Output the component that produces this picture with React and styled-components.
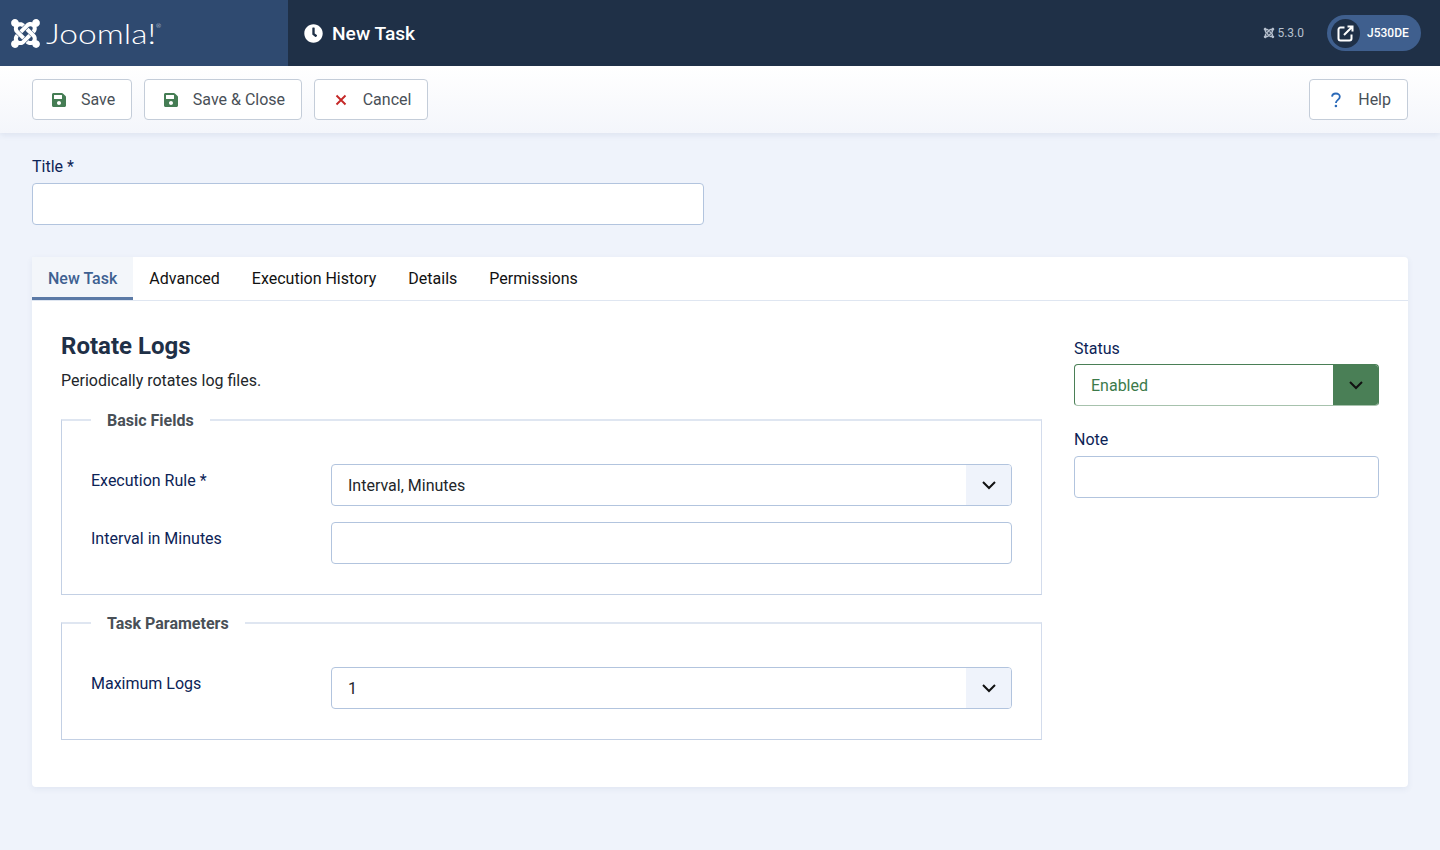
import React from 'react';

import styled, { createGlobalStyle } from 'styled-components';
import { FaClock, FaJoomla, FaSave } from 'react-icons/fa';

const GlobalStyle = createGlobalStyle`
  html, body {
    margin: 0;
    background: #eff3fb;
    font-family: Roboto, "Liberation Sans", sans-serif;
    font-size: 16px;
    color: #22262a;
  }
  * {
    box-sizing: border-box;
  }
`;

const Header = styled.header`
  display: flex;
  height: 66px;
  background: #1f3047;
  color: #fff;
`;

const LogoPanel = styled.div`
  display: flex;
  align-items: center;
  width: 288px;
  padding-left: 9px;
  background: #2f4a70;
`;

const LogoMark = styled(FaJoomla)`
  width: 33px;
  height: 33px;
`;

const LogoWord = styled.span`
  margin-left: 4px;
  font-family: Lato, Inter, sans-serif;
  font-size: 28px;
  font-weight: 300;
  line-height: 1;
  transform: scaleX(1.2);
  transform-origin: left center;
`;

const LogoReg = styled.sup`
  font-size: 5px;
  vertical-align: 16px;
  line-height: 0;
`;

const PageTitle = styled.h1`
  display: flex;
  flex: 1;
  align-items: center;
  gap: 9px;
  margin: 0;
  padding-left: 16px;
  font-size: 19.2px;
  font-weight: 500;
`;

const HeaderRight = styled.div`
  display: flex;
  align-items: center;
  gap: 23px;
  padding-right: 19px;
`;

const Version = styled.span`
  display: flex;
  align-items: center;
  gap: 2px;
  font-size: 12px;
  color: #b7c1cf;
`;

const SitePill = styled.div`
  display: flex;
  align-items: center;
  width: 94px;
  height: 36px;
  padding: 0 4px;
  border-radius: 18px;
  background: #3f5f8e;
  font-size: 12px;
  font-weight: 500;
`;

const SiteIcon = styled.span`
  display: flex;
  align-items: center;
  justify-content: center;
  width: 29px;
  height: 29px;
  margin-right: 7px;
  border-radius: 50%;
  background: #1f3047;
`;

const Toolbar = styled.div`
  display: flex;
  align-items: center;
  justify-content: space-between;
  height: 67px;
  padding: 0 32px;
  background: linear-gradient(180deg, #fff 0%, #f4f6fb 100%);
  box-shadow: 0 2px 6px rgba(60, 90, 140, 0.1);
`;

const ButtonGroup = styled.div`
  display: flex;
  gap: 11.6px;
`;

const ToolButton = styled.button`
  display: flex;
  align-items: center;
  height: 41px;
  padding: 0 16px;
  border: 1px solid #c4cdd9;
  border-radius: 4px;
  background: #fff;
  color: #495057;
  font-family: inherit;
  font-size: 16px;
`;

const ButtonIcon = styled.span`
  display: flex;
  justify-content: center;
  width: 22px;
  margin-right: 11px;
  margin-left: -1px;
  font-size: 16px;
  color: ${({ $color }) => $color};
`;

const Main = styled.main`
  padding: 24px 32px 63px;
`;

const TitleField = styled.div`
  width: 672px;
  margin-bottom: 32px;
`;

const Label = styled.label`
  display: block;
  line-height: 24px;
  color: #0c2356;
`;

const TitleLabel = styled(Label)`
  margin-top: -2px;
  margin-bottom: 4px;
`;

const TextInput = styled.input`
  display: block;
  width: 100%;
  height: 42px;
  padding: 0 16px;
  border: 1px solid #b2c4de;
  border-radius: 4px;
  background: #fff;
`;

const TabsCard = styled.section`
  border-radius: 4px;
  background: #fff;
  box-shadow: 0 2px 6px rgba(60, 90, 140, 0.08);
`;

const TabList = styled.div`
  display: flex;
  height: 44px;
  border-bottom: 1px solid #dfe6f1;
`;

const Tab = styled.div`
  display: flex;
  align-items: center;
  height: 43px;
  padding: 2px 16px 0;
  border-bottom: 3px solid ${({ $active }) => ($active ? '#5b7aa6' : 'transparent')};
  background: ${({ $active }) => ($active ? '#f3f6fa' : 'transparent')};
  color: ${({ $active }) => ($active ? '#3e6191' : '#111')};
  font-weight: ${({ $active }) => ($active ? 500 : 400)};
`;

const TabBody = styled.div`
  display: grid;
  grid-template-columns: 981px 305px;
  column-gap: 32px;
  padding: 30px 29px 47px;
`;

const Heading = styled.h2`
  margin: 0 0 8px;
  font-size: 24px;
  font-weight: 700;
  line-height: 30px;
  color: #1f3047;
`;

const Description = styled.p`
  margin: 0 0 14px;
  line-height: 24px;
`;

const Fieldset = styled.fieldset`
  min-width: 0;
  margin: 0 0 15px;
  padding: 31px 29px 30px;
  border: 1px solid #dfe6f1;
  border-left-color: #c3d0e4;
  border-bottom-color: #c3d0e4;
  border-right-color: #d3dcec;
  border-top-width: 2px;

  &:last-child {
    margin-bottom: 0;
  }
`;

const Legend = styled.legend`
  margin-left: 0;
  padding: 2px 16px 0;
  font-weight: 700;
  line-height: 24px;
  color: #495057;
`;

const FormRow = styled.div`
  display: grid;
  grid-template-columns: 240px 681px;
  margin-bottom: 16px;

  &:last-child {
    margin-bottom: 0;
  }
`;

const RowLabel = styled(Label)`
  padding-top: 5px;
`;

const SelectWrap = styled.div`
  position: relative;
  height: 42px;
`;

const Select = styled.select`
  display: block;
  width: 100%;
  height: 42px;
  padding: 0 16px;
  border: 1px solid ${({ $success }) => ($success ? '#4a7f56' : '#b2c4de')};
  border-bottom-color: ${({ $success }) => ($success ? '#a7c2ad' : '#b2c4de')};
  border-radius: 4px;
  background: #fff;
  color: ${({ $success }) => ($success ? '#3c7a4a' : '#22262a')};
  font-family: inherit;
  font-size: 16px;
  appearance: none;
`;

const SelectArrow = styled.span`
  position: absolute;
  top: 1px;
  right: 1px;
  bottom: 1px;
  display: flex;
  align-items: center;
  justify-content: center;
  width: 45px;
  border-radius: 0 3px 3px 0;
  background: ${({ $success }) => ($success ? '#4a7f56' : '#eff3fb')};
  pointer-events: none;
`;

const SidePanel = styled.aside`
  padding-top: 6px;
`;

const SideField = styled.div`
  margin-bottom: 22px;
`;

const SideLabel = styled(Label)`
  margin-bottom: ${({ $gap }) => $gap}px;
`;

const Chevron = () => (
  <svg width="16" height="16" viewBox="0 0 16 16" fill="none">
    <path d="M2 5l6 6 6-6" stroke="#111" strokeWidth="2" />
  </svg>
);

const CrossIcon = () => (
  <svg width="12" height="12" viewBox="0 0 12 12" fill="none">
    <path d="M1.5 1.5l9 9M10.5 1.5l-9 9" stroke="currentColor" strokeWidth="1.9" />
  </svg>
);

const QuestionIcon = () => (
  <svg width="10" height="16" viewBox="0 0 10 16" fill="none">
    <path
      d="M1 4.6C1.2 2.6 2.8 1.5 4.9 1.5c2.2 0 3.9 1.3 3.9 3.3 0 3-3.9 3.2-3.9 6.2"
      stroke="currentColor"
      strokeWidth="1.8"
    />
    <circle cx="4.9" cy="14" r="1.3" fill="currentColor" />
  </svg>
);

const ExternalIcon = () => (
  <svg width="17" height="17" viewBox="0 0 17 17" fill="none" stroke="#fff" strokeWidth="2">
    <path d="M7.5 2.5H3.5a2 2 0 0 0-2 2v9a2 2 0 0 0 2 2h9a2 2 0 0 0 2-2V9.5" />
    <path d="M7 10l8.5-8.5M10.5 1.5h5v5" />
  </svg>
);

const Dropdown = ({ value, success }) => (
  <SelectWrap>
    <Select $success={success} defaultValue={value}>
      <option>{value}</option>
    </Select>
    <SelectArrow $success={success}>
      <Chevron />
    </SelectArrow>
  </SelectWrap>
);

export default function App() {
  return (
    <>
      <GlobalStyle />
      <Header>
        <LogoPanel>
          <LogoMark />
          <LogoWord>
            Joomla!<LogoReg>®</LogoReg>
          </LogoWord>
        </LogoPanel>
        <PageTitle>
          <FaClock size={19} />
          New Task
        </PageTitle>
        <HeaderRight>
          <Version>
            <FaJoomla size={12} /> 5.3.0
          </Version>
          <SitePill>
            <SiteIcon>
              <ExternalIcon />
            </SiteIcon>
            J530DE
          </SitePill>
        </HeaderRight>
      </Header>
      <Toolbar>
        <ButtonGroup>
          <ToolButton>
            <ButtonIcon $color="#457d54"><FaSave /></ButtonIcon>
            Save
          </ToolButton>
          <ToolButton>
            <ButtonIcon $color="#457d54"><FaSave /></ButtonIcon>
            Save &amp; Close
          </ToolButton>
          <ToolButton>
            <ButtonIcon $color="#c52827"><CrossIcon /></ButtonIcon>
            Cancel
          </ToolButton>
        </ButtonGroup>
        <ToolButton>
          <ButtonIcon $color="#2a69b8"><QuestionIcon /></ButtonIcon>
          Help
        </ToolButton>
      </Toolbar>
      <Main>
        <TitleField>
          <TitleLabel>Title *</TitleLabel>
          <TextInput />
        </TitleField>
        <TabsCard>
          <TabList>
            <Tab $active>New Task</Tab>
            <Tab>Advanced</Tab>
            <Tab>Execution History</Tab>
            <Tab>Details</Tab>
            <Tab>Permissions</Tab>
          </TabList>
          <TabBody>
            <div>
              <Heading>Rotate Logs</Heading>
              <Description>Periodically rotates log files.</Description>
              <Fieldset>
                <Legend>Basic Fields</Legend>
                <FormRow>
                  <RowLabel>Execution Rule *</RowLabel>
                  <Dropdown value="Interval, Minutes" />
                </FormRow>
                <FormRow>
                  <RowLabel>Interval in Minutes</RowLabel>
                  <TextInput />
                </FormRow>
              </Fieldset>
              <Fieldset>
                <Legend>Task Parameters</Legend>
                <FormRow>
                  <RowLabel>Maximum Logs</RowLabel>
                  <Dropdown value="1" />
                </FormRow>
              </Fieldset>
            </div>
            <SidePanel>
              <SideField>
                <SideLabel $gap={3}>Status</SideLabel>
                <Dropdown value="Enabled" success />
              </SideField>
              <SideField>
                <SideLabel $gap={4}>Note</SideLabel>
                <TextInput />
              </SideField>
            </SidePanel>
          </TabBody>
        </TabsCard>
      </Main>
    </>
  );
}
